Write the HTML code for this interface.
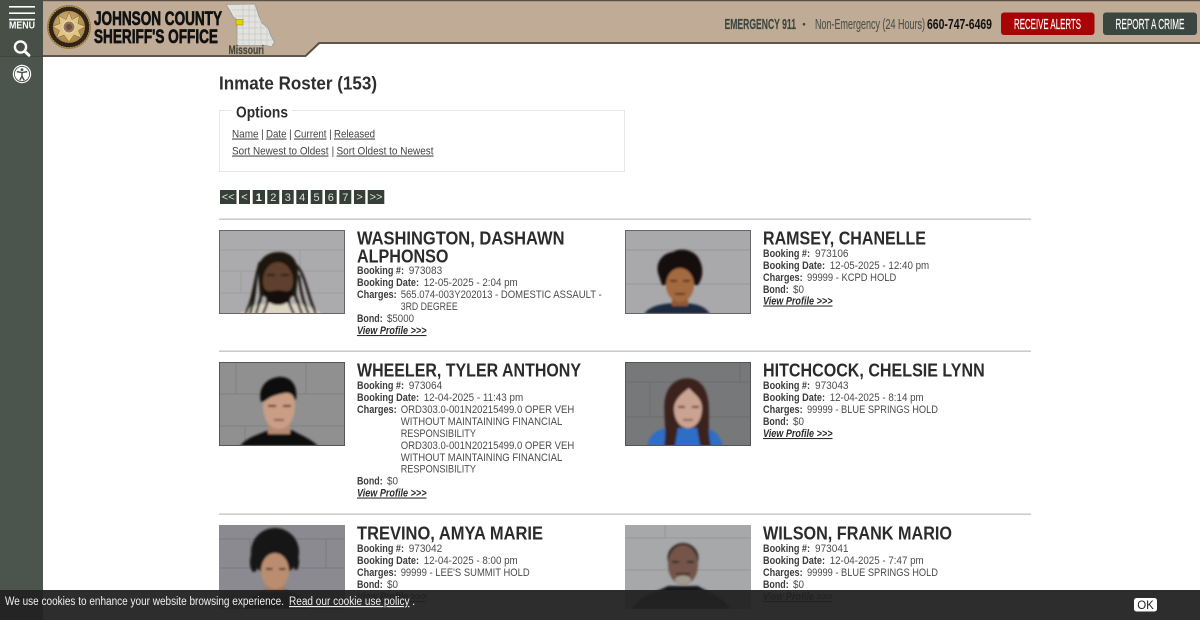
<!DOCTYPE html>
<html><head><meta charset="utf-8"><title>Inmate Roster</title>
<style>
html,body{margin:0;padding:0;background:#fff;width:1200px;height:620px;overflow:hidden}
svg{display:block;position:absolute;left:0;top:0}
text{font-family:"Liberation Sans",Arial,sans-serif}
.n{font-size:18px;font-weight:700;fill:#2b2b2b}
.l{font-size:10.8px;font-weight:700;fill:#3c3c3c}
.v{font-size:10.8px;fill:#4c4c4c}
.p{font-size:10.8px;font-weight:700;font-style:italic;fill:#2b2b2b;text-decoration:underline}
.o{font-size:10.8px;fill:#454545;text-decoration:underline}
.s{font-size:10.8px;fill:#555}
.g{font-size:11px;fill:#e0e0e0;text-anchor:middle}
.pg{fill:#353f38}
.h{font-size:14.5px}
</style></head><body>
<svg width="1200" height="620" viewBox="0 0 1200 620" xmlns="http://www.w3.org/2000/svg">
<defs>
<filter id="b" x="-10%" y="-10%" width="120%" height="120%"><feGaussianBlur stdDeviation="1"/></filter>
<radialGradient id="gold" cx="45%" cy="40%" r="65%"><stop offset="0" stop-color="#d8b980"/><stop offset="1" stop-color="#a37f42"/></radialGradient>
<clipPath id="c1"><rect x="219" y="230" width="126" height="84"/></clipPath>
<clipPath id="c2"><rect x="625" y="230" width="126" height="84"/></clipPath>
<clipPath id="c3"><rect x="219" y="362" width="126" height="84"/></clipPath>
<clipPath id="c4"><rect x="625" y="362" width="126" height="84"/></clipPath>
<clipPath id="c5"><rect x="219" y="525" width="126" height="84"/></clipPath>
<clipPath id="c6"><rect x="625" y="525" width="126" height="84"/></clipPath>
</defs>

<!-- sidebar -->
<rect x="0" y="0" width="43" height="620" fill="#4b554e"/>
<rect x="0" y="0" width="43" height="56" fill="#484f47"/>
<rect x="0" y="56" width="43" height="1" fill="#3d443e"/>
<rect x="9" y="6" width="26" height="1.6" fill="#fff"/>
<rect x="9" y="12.4" width="26" height="1.6" fill="#fff"/>
<rect x="9" y="18.8" width="26" height="1.6" fill="#fff"/>
<text x="9" y="28.5" font-size="10.5" font-weight="700" fill="#fff" textLength="26" lengthAdjust="spacingAndGlyphs">MENU</text>
<circle cx="20.5" cy="47" r="5.6" fill="none" stroke="#fff" stroke-width="2.4"/>
<path d="M24.6 51.2L29 55.4" stroke="#fff" stroke-width="2.8" stroke-linecap="round"/>
<circle cx="22" cy="74" r="9.2" fill="#fff"/>
<circle cx="22" cy="74" r="7.6" fill="none" stroke="#4b554e" stroke-width=".9"/>
<circle cx="22" cy="69.6" r="1.4" fill="#4b554e"/>
<path d="M16.8 71.6L22 72.6L27.2 71.6M22 72.6V76.2M22 76.2L19.8 80.4M22 76.2L24.2 80.4" stroke="#4b554e" stroke-width="1.5" fill="none"/>

<!-- header -->
<path d="M43 0H1200V44H320L306 57H43Z" fill="#bfab96"/>
<rect x="43" y="0" width="1157" height="1.2" fill="#5a4e44"/>
<path d="M43 56H305.5L319 43H1200" fill="none" stroke="#564a40" stroke-width="1.8"/>

<!-- badge -->
<circle cx="69" cy="27" r="22" fill="#9b7c42"/>
<circle cx="69" cy="27" r="20.5" fill="#2f2415"/>
<circle cx="69" cy="27" r="20.5" fill="none" stroke="#c4a46a" stroke-width=".7" stroke-dasharray="1.5 1.2"/>
<circle cx="69" cy="27" r="16" fill="url(#gold)"/>
<path d="M69 12L72 19.500L79.500 15.500L78 23.500L85.500 26.500L78.500 30.500L81.500 38L74 35L69 42L64 35L56.500 38L59.500 30.500L52.500 26.500L60 23.500L58.500 15.500L66 19.500Z" fill="#e0c587" stroke="#7a5a28" stroke-width=".5"/>
<circle cx="69" cy="27" r="6" fill="#8c7758" stroke="#eadbb0" stroke-width="1.100"/>
<circle cx="69" cy="27" r="3" fill="#7a4a40"/>

<!-- logo text -->
<text x="94" y="25" font-size="19.500" font-weight="700" fill="#111" stroke="#111" stroke-width=".7" textLength="128" lengthAdjust="spacingAndGlyphs">JOHNSON COUNTY</text>
<text x="94" y="43" font-size="19.500" font-weight="700" fill="#111" stroke="#111" stroke-width=".7" textLength="124" lengthAdjust="spacingAndGlyphs">SHERIFF'S OFFICE</text>

<!-- map -->
<path d="M226 4.500L255 4L257 10L258.500 15L262 23L268 28L271 36L274.500 42L271.500 47L266 45.500L237 45.500L237 20L233 16.500L230 11Z" fill="#e2e2df" stroke="#9a9a95" stroke-width=".8"/>
<path d="M232 10H257M235 16H259M237 22H263M237 28H267M237 34H270M237 40H273M243 4V45M249 4V45M255 5V45M261 20V45M267 28V45" stroke="#bcbcb8" stroke-width=".5" fill="none"/>
<rect x="236" y="19.500" width="7" height="5.500" fill="#e3d400" stroke="#8a8020" stroke-width=".5"/>
<text x="228.500" y="54" font-size="11.500" font-weight="700" fill="#46463c" stroke="#46463c" stroke-width=".2" textLength="35.500" lengthAdjust="spacingAndGlyphs">Missouri</text>

<!-- header right -->
<text class="h" x="724.500" y="29" font-weight="700" fill="#3c4640" stroke="#3c4640" stroke-width=".15" textLength="71.500" lengthAdjust="spacingAndGlyphs">EMERGENCY 911</text>
<circle cx="804" cy="24.200" r="1.300" fill="#3c4640"/>
<text class="h" x="815" y="29" fill="#4d5248" stroke="#4d5248" stroke-width=".12" textLength="110" lengthAdjust="spacingAndGlyphs">Non-Emergency (24 Hours)</text>
<text class="h" x="927" y="29" font-weight="700" fill="#111" textLength="65" lengthAdjust="spacingAndGlyphs">660-747-6469</text>
<rect x="1001" y="12.500" width="93.500" height="22.500" rx="3" fill="#a70405"/>
<text class="h" x="1014" y="29" fill="#fff" stroke="#fff" stroke-width=".15" textLength="67" lengthAdjust="spacingAndGlyphs">RECEIVE ALERTS</text>
<rect x="1103" y="12.500" width="94" height="22.500" rx="3" fill="#3c4640"/>
<text class="h" x="1115.500" y="29" fill="#fff" stroke="#fff" stroke-width=".15" textLength="69" lengthAdjust="spacingAndGlyphs">REPORT A CRIME</text>

<!-- title -->
<text x="219" y="89.500" font-size="18" font-weight="700" fill="#2e2e2e" textLength="158" lengthAdjust="spacingAndGlyphs">Inmate Roster (153)</text>

<!-- options -->
<path d="M232 110.500H219.500V171.500H624.500V110.500H292" fill="none" stroke="#e6e6e6" stroke-width="1"/>
<text x="236" y="117.500" font-size="15.500" font-weight="700" fill="#2e2e2e" textLength="52" lengthAdjust="spacingAndGlyphs">Options</text>
<text class="o" x="232" y="137.500" textLength="26.500" lengthAdjust="spacingAndGlyphs">Name</text>
<text class="s" x="261" y="137.500">|</text>
<text class="o" x="266" y="137.500" textLength="20.500" lengthAdjust="spacingAndGlyphs">Date</text>
<text class="s" x="289" y="137.500">|</text>
<text class="o" x="294" y="137.500" textLength="32.500" lengthAdjust="spacingAndGlyphs">Current</text>
<text class="s" x="329" y="137.500">|</text>
<text class="o" x="334" y="137.500" textLength="41" lengthAdjust="spacingAndGlyphs">Released</text>
<text class="o" x="232" y="154.500" textLength="96.500" lengthAdjust="spacingAndGlyphs">Sort Newest to Oldest</text>
<text class="s" x="331.500" y="154.500">|</text>
<text class="o" x="336.500" y="154.500" textLength="97" lengthAdjust="spacingAndGlyphs">Sort Oldest to Newest</text>

<!-- pagination -->
<rect class="pg" x="220" y="190" width="16.500" height="14"/><text class="g" x="228.200" y="200.500" font-size="9">&lt;&lt;</text>
<rect class="pg" x="239" y="190" width="11" height="14"/><text class="g" x="244.500" y="200.500" font-size="9">&lt;</text>
<rect class="pg" x="252.700" y="190" width="12.300" height="14"/><text class="g" x="258.800" y="201" style="fill:#fff;font-weight:700">1</text>
<rect class="pg" x="267.300" y="190" width="12" height="14"/><text class="g" x="273.300" y="201">2</text>
<rect class="pg" x="282" y="190" width="11.700" height="14"/><text class="g" x="287.800" y="201">3</text>
<rect class="pg" x="296.300" y="190" width="11.700" height="14"/><text class="g" x="302.200" y="201">4</text>
<rect class="pg" x="310.700" y="190" width="11.700" height="14"/><text class="g" x="316.500" y="201">5</text>
<rect class="pg" x="325" y="190" width="11.700" height="14"/><text class="g" x="330.800" y="201">6</text>
<rect class="pg" x="339.300" y="190" width="12" height="14"/><text class="g" x="345.300" y="201">7</text>
<rect class="pg" x="354" y="190" width="11.300" height="14"/><text class="g" x="359.600" y="200.500" font-size="9">&gt;</text>
<rect class="pg" x="367.700" y="190" width="16.600" height="14"/><text class="g" x="376" y="200.500" font-size="9">&gt;&gt;</text>

<!-- dividers -->
<rect x="219" y="218.500" width="812" height="1.300" fill="#c0c0c0"/>
<rect x="219" y="350.500" width="812" height="1.300" fill="#c0c0c0"/>
<rect x="219" y="513.500" width="812" height="1.300" fill="#c0c0c0"/>

<!-- mug 1 -->
<g clip-path="url(#c1)">
<rect x="219" y="230" width="126" height="84" fill="#ababad"/>
<path d="M219 250H345M219 271H345M219 293H345M241 271V293M300 250V271" stroke="#9c9c9e" stroke-width="1" fill="none"/>
<g filter="url(#b)">
<path d="M240 314C250 306 262 303 278 303C296 303 312 306 322 314Z" fill="#ddd4c2"/>
<path d="M258 272C258 258 268 252 279 252C291 252 298 260 298 274L296 296H260Z" fill="#1c1511"/>
<path d="M260 262C254 280 254 300 245 314M257 272C255 290 254 302 250 314M262 285C262 298 258 306 256 314M296 265C306 275 307 295 316 314M299 275C300 290 304 305 309 314M294 290C296 300 300 308 302 314M288 300C290 306 292 310 294 314M268 300C267 306 264 310 263 314" stroke="#1c1511" stroke-width="2.400" fill="none"/>
<ellipse cx="278" cy="281" rx="15" ry="19" fill="#5f3f2d"/>
<path d="M263 284C264 303 273 305 278 305C284 305 293 303 293 284C291 294 286 291 278 290C270 291 265 294 263 284Z" fill="#15100c"/>
<rect x="267" y="274" width="8" height="2" fill="#2a1a12"/><rect x="281" y="274" width="8" height="2" fill="#2a1a12"/>
</g></g>
<rect x="219.500" y="230.500" width="125" height="83" fill="none" stroke="#666" stroke-width="1"/>

<!-- mug 2 -->
<g clip-path="url(#c2)">
<rect x="625" y="230" width="126" height="84" fill="#a9a9ab"/>
<path d="M625 250H751M625 284H751" stroke="#97979a" stroke-width="1" fill="none"/>
<g filter="url(#b)">
<path d="M644 314C650 305 665 303 680 303C696 303 705 306 710 314Z" fill="#1e2a40"/>
<rect x="672" y="296" width="16" height="10" fill="#8f5832"/>
<path d="M659 276C654 264 662 253 673 252C680 247 695 250 699 259C704 268 703 278 698 285L662 285Z" fill="#15110f"/>
<ellipse cx="680" cy="285" rx="14" ry="17" fill="#a5693f"/>
<rect x="670" y="280" width="7" height="1.800" fill="#4a2c1a"/><rect x="683" y="280" width="7" height="1.800" fill="#4a2c1a"/>
<rect x="675" y="293" width="10" height="1.800" fill="#5a2f20"/>
</g></g>
<rect x="625.500" y="230.500" width="125" height="83" fill="none" stroke="#666" stroke-width="1"/>

<!-- mug 3 -->
<g clip-path="url(#c3)">
<rect x="219" y="362" width="126" height="84" fill="#909091"/>
<path d="M219 394H345M219 426H345M236 362V394M306 362V394M245 426V446" stroke="#818183" stroke-width="1" fill="none"/>
<g filter="url(#b)">
<path d="M240 446C248 436 262 434 268 430H292C298 434 310 438 318 446Z" fill="#0e0e0f"/>
<rect x="268" y="420" width="22" height="14" fill="#b58a72"/>
<path d="M261 402C258 390 264 379 278 377C292 376 298 386 296 400L280 396Z" fill="#0f0e10"/>
<path d="M263 405C266 397 276 395 285 393C291 392 295 396 295 405C295 420 288 429 279 429C270 429 263 420 263 405Z" fill="#c99e85"/>
<rect x="268" y="405" width="8" height="1.800" fill="#30221c"/><rect x="283" y="405" width="8" height="1.800" fill="#30221c"/>
<rect x="274" y="419" width="10" height="1.800" fill="#7f5048"/>
</g></g>
<rect x="219.500" y="362.500" width="125" height="83" fill="none" stroke="#555" stroke-width="1"/>

<!-- mug 4 -->
<g clip-path="url(#c4)">
<rect x="625" y="362" width="126" height="84" fill="#77787a"/>
<path d="M625 382H751M625 417H751M650 382V417M740 362V382" stroke="#6a6b6d" stroke-width="1" fill="none"/>
<g filter="url(#b)">
<path d="M647 446C650 432 660 428 672 428H704C716 430 720 436 723 446Z" fill="#2f6ec4"/>
<path d="M664 446C668 425 660 405 668 390C676 374 700 374 706 392C712 408 706 425 711 446H700L697 428H678L675 446Z" fill="#3a241f"/>
<path d="M674 408C675 398 684 392 689 388C694 394 702 398 702 408C702 420 696 428 688 428C680 428 674 420 674 408Z" fill="#cba392"/>
<rect x="678" y="406" width="7" height="1.800" fill="#4a302a"/><rect x="692" y="406" width="7" height="1.800" fill="#4a302a"/>
<rect x="683" y="419" width="10" height="1.800" fill="#8a5a52"/>
</g></g>
<rect x="625.500" y="362.500" width="125" height="83" fill="none" stroke="#555" stroke-width="1"/>

<!-- mug 5 -->
<g clip-path="url(#c5)">
<rect x="219" y="525" width="126" height="84" fill="#8a8a90"/>
<path d="M219 539H345M219 568H345M250 539V568M326 539V568" stroke="#7a7a80" stroke-width="1" fill="none"/>
<g filter="url(#b)">
<path d="M242 609C250 596 262 590 275 588C290 590 302 596 310 609Z" fill="#0e0e10"/>
<circle cx="275" cy="552" r="24" fill="#141214"/>
<ellipse cx="254" cy="562" rx="4" ry="10" fill="#141214"/>
<ellipse cx="296" cy="562" rx="3" ry="8" fill="#141214"/>
<rect x="266" y="584" width="18" height="7" fill="#a87c60"/>
<ellipse cx="275" cy="571" rx="14" ry="18" fill="#bb8d70"/>
<rect x="266" y="568" width="6.500" height="1.800" fill="#2a1c18"/><rect x="279" y="568" width="6.500" height="1.800" fill="#2a1c18"/>
</g></g>

<!-- mug 6 -->
<g clip-path="url(#c6)">
<rect x="625" y="525" width="126" height="84" fill="#a6a8a9"/>
<path d="M625 538H751M625 570H751M665 525V538" stroke="#959798" stroke-width="1" fill="none"/>
<g filter="url(#b)">
<path d="M632 609C640 596 656 592 668 586H698C708 592 722 596 730 609Z" fill="#17171a"/>
<ellipse cx="683" cy="558" rx="15.500" ry="15" fill="#332621"/>
<ellipse cx="683" cy="565" rx="15" ry="20" fill="#74554a"/>
<ellipse cx="683" cy="580" rx="8" ry="4.500" fill="#a09a90"/>
<rect x="672" y="561" width="7" height="1.800" fill="#251a16"/><rect x="687" y="561" width="7" height="1.800" fill="#251a16"/>
<rect x="676" y="573" width="14" height="1.800" fill="#3a2a25"/>
</g></g>

<!-- entry 1 -->
<text class="n" x="357" y="244.500" textLength="207.500" lengthAdjust="spacingAndGlyphs">WASHINGTON, DASHAWN</text>
<text class="n" x="357" y="262.500" textLength="91.500" lengthAdjust="spacingAndGlyphs">ALPHONSO</text>
<text class="l" x="357" y="274" textLength="47" lengthAdjust="spacingAndGlyphs">Booking #:</text><text class="v" x="408.700" y="274" textLength="33.500" lengthAdjust="spacingAndGlyphs">973083</text>
<text class="l" x="357" y="286" textLength="62" lengthAdjust="spacingAndGlyphs">Booking Date:</text><text class="v" x="423.700" y="286" textLength="94" lengthAdjust="spacingAndGlyphs">12-05-2025 - 2:04 pm</text>
<text class="l" x="357" y="298" textLength="39.700" lengthAdjust="spacingAndGlyphs">Charges:</text><text class="v" x="400.700" y="298" textLength="201" lengthAdjust="spacingAndGlyphs">565.074-003Y202013 - DOMESTIC ASSAULT -</text>
<text class="v" x="400.700" y="310" textLength="57" lengthAdjust="spacingAndGlyphs">3RD DEGREE</text>
<text class="l" x="357" y="322" textLength="25.700" lengthAdjust="spacingAndGlyphs">Bond:</text><text class="v" x="387" y="322" textLength="27" lengthAdjust="spacingAndGlyphs">$5000</text>
<text class="p" x="357" y="334" textLength="69.500" lengthAdjust="spacingAndGlyphs">View Profile &gt;&gt;&gt;</text>

<!-- entry 2 -->
<text class="n" x="763" y="244.500" textLength="163" lengthAdjust="spacingAndGlyphs">RAMSEY, CHANELLE</text>
<text class="l" x="763" y="257" textLength="47" lengthAdjust="spacingAndGlyphs">Booking #:</text><text class="v" x="815" y="257" textLength="33.500" lengthAdjust="spacingAndGlyphs">973106</text>
<text class="l" x="763" y="269" textLength="62" lengthAdjust="spacingAndGlyphs">Booking Date:</text><text class="v" x="829.700" y="269" textLength="99.500" lengthAdjust="spacingAndGlyphs">12-05-2025 - 12:40 pm</text>
<text class="l" x="763" y="281" textLength="39.700" lengthAdjust="spacingAndGlyphs">Charges:</text><text class="v" x="807" y="281" textLength="89.300" lengthAdjust="spacingAndGlyphs">99999 - KCPD HOLD</text>
<text class="l" x="763" y="293" textLength="25.700" lengthAdjust="spacingAndGlyphs">Bond:</text><text class="v" x="793" y="293" textLength="11" lengthAdjust="spacingAndGlyphs">$0</text>
<text class="p" x="763" y="304.500" textLength="69.500" lengthAdjust="spacingAndGlyphs">View Profile &gt;&gt;&gt;</text>

<!-- entry 3 -->
<text class="n" x="357" y="376.500" textLength="224" lengthAdjust="spacingAndGlyphs">WHEELER, TYLER ANTHONY</text>
<text class="l" x="357" y="389" textLength="47" lengthAdjust="spacingAndGlyphs">Booking #:</text><text class="v" x="408.700" y="389" textLength="33.500" lengthAdjust="spacingAndGlyphs">973064</text>
<text class="l" x="357" y="401" textLength="62" lengthAdjust="spacingAndGlyphs">Booking Date:</text><text class="v" x="423.700" y="401" textLength="99.500" lengthAdjust="spacingAndGlyphs">12-04-2025 - 11:43 pm</text>
<text class="l" x="357" y="413" textLength="39.700" lengthAdjust="spacingAndGlyphs">Charges:</text><text class="v" x="400.700" y="413" textLength="173.600" lengthAdjust="spacingAndGlyphs">ORD303.0-001N20215499.0 OPER VEH</text>
<text class="v" x="400.700" y="425" textLength="161.600" lengthAdjust="spacingAndGlyphs">WITHOUT MAINTAINING FINANCIAL</text>
<text class="v" x="400.700" y="437" textLength="75.300" lengthAdjust="spacingAndGlyphs">RESPONSIBILITY</text>
<text class="v" x="400.700" y="449" textLength="173.600" lengthAdjust="spacingAndGlyphs">ORD303.0-001N20215499.0 OPER VEH</text>
<text class="v" x="400.700" y="461" textLength="161.600" lengthAdjust="spacingAndGlyphs">WITHOUT MAINTAINING FINANCIAL</text>
<text class="v" x="400.700" y="472.500" textLength="75.300" lengthAdjust="spacingAndGlyphs">RESPONSIBILITY</text>
<text class="l" x="357" y="484.500" textLength="25.700" lengthAdjust="spacingAndGlyphs">Bond:</text><text class="v" x="387" y="484.500" textLength="11" lengthAdjust="spacingAndGlyphs">$0</text>
<text class="p" x="357" y="496.500" textLength="69.500" lengthAdjust="spacingAndGlyphs">View Profile &gt;&gt;&gt;</text>

<!-- entry 4 -->
<text class="n" x="763" y="376.500" textLength="221.700" lengthAdjust="spacingAndGlyphs">HITCHCOCK, CHELSIE LYNN</text>
<text class="l" x="763" y="389" textLength="47" lengthAdjust="spacingAndGlyphs">Booking #:</text><text class="v" x="815" y="389" textLength="33.500" lengthAdjust="spacingAndGlyphs">973043</text>
<text class="l" x="763" y="401" textLength="62" lengthAdjust="spacingAndGlyphs">Booking Date:</text><text class="v" x="829.700" y="401" textLength="94" lengthAdjust="spacingAndGlyphs">12-04-2025 - 8:14 pm</text>
<text class="l" x="763" y="413" textLength="39.700" lengthAdjust="spacingAndGlyphs">Charges:</text><text class="v" x="807" y="413" textLength="131" lengthAdjust="spacingAndGlyphs">99999 - BLUE SPRINGS HOLD</text>
<text class="l" x="763" y="425" textLength="25.700" lengthAdjust="spacingAndGlyphs">Bond:</text><text class="v" x="793" y="425" textLength="11" lengthAdjust="spacingAndGlyphs">$0</text>
<text class="p" x="763" y="437" textLength="69.500" lengthAdjust="spacingAndGlyphs">View Profile &gt;&gt;&gt;</text>

<!-- entry 5 -->
<text class="n" x="357" y="539.500" textLength="186" lengthAdjust="spacingAndGlyphs">TREVINO, AMYA MARIE</text>
<text class="l" x="357" y="552" textLength="47" lengthAdjust="spacingAndGlyphs">Booking #:</text><text class="v" x="408.700" y="552" textLength="33.500" lengthAdjust="spacingAndGlyphs">973042</text>
<text class="l" x="357" y="564" textLength="62" lengthAdjust="spacingAndGlyphs">Booking Date:</text><text class="v" x="423.700" y="564" textLength="94" lengthAdjust="spacingAndGlyphs">12-04-2025 - 8:00 pm</text>
<text class="l" x="357" y="576" textLength="39.700" lengthAdjust="spacingAndGlyphs">Charges:</text><text class="v" x="400.700" y="576" textLength="129" lengthAdjust="spacingAndGlyphs">99999 - LEE'S SUMMIT HOLD</text>
<text class="l" x="357" y="588" textLength="25.700" lengthAdjust="spacingAndGlyphs">Bond:</text><text class="v" x="387" y="588" textLength="11" lengthAdjust="spacingAndGlyphs">$0</text>
<text class="p" x="357" y="600" textLength="69.500" lengthAdjust="spacingAndGlyphs">View Profile &gt;&gt;&gt;</text>

<!-- entry 6 -->
<text class="n" x="763" y="539.500" textLength="189" lengthAdjust="spacingAndGlyphs">WILSON, FRANK MARIO</text>
<text class="l" x="763" y="552" textLength="47" lengthAdjust="spacingAndGlyphs">Booking #:</text><text class="v" x="815" y="552" textLength="33.500" lengthAdjust="spacingAndGlyphs">973041</text>
<text class="l" x="763" y="564" textLength="62" lengthAdjust="spacingAndGlyphs">Booking Date:</text><text class="v" x="829.700" y="564" textLength="94" lengthAdjust="spacingAndGlyphs">12-04-2025 - 7:47 pm</text>
<text class="l" x="763" y="576" textLength="39.700" lengthAdjust="spacingAndGlyphs">Charges:</text><text class="v" x="807" y="576" textLength="131" lengthAdjust="spacingAndGlyphs">99999 - BLUE SPRINGS HOLD</text>
<text class="l" x="763" y="588" textLength="25.700" lengthAdjust="spacingAndGlyphs">Bond:</text><text class="v" x="793" y="588" textLength="11" lengthAdjust="spacingAndGlyphs">$0</text>
<text class="p" x="763" y="600" textLength="69.500" lengthAdjust="spacingAndGlyphs">View Profile &gt;&gt;&gt;</text>

<!-- cookie bar -->
<rect x="0" y="590" width="1200" height="30" fill="#222" fill-opacity=".95"/>
<text x="5" y="605" font-size="11.500" fill="#f0f0f0" textLength="279" lengthAdjust="spacingAndGlyphs">We use cookies to enhance your website browsing experience.</text>
<text x="289" y="605" font-size="11.500" fill="#f0f0f0" text-decoration="underline" textLength="120.500" lengthAdjust="spacingAndGlyphs">Read our cookie use policy</text>
<text x="412" y="605" font-size="11.500" fill="#f0f0f0">.</text>
<rect x="1134" y="598" width="23" height="13.500" rx="2.500" fill="#fff"/>
<text x="1145.500" y="609" font-size="11.500" fill="#222" text-anchor="middle">OK</text>
</svg>
</body></html>
